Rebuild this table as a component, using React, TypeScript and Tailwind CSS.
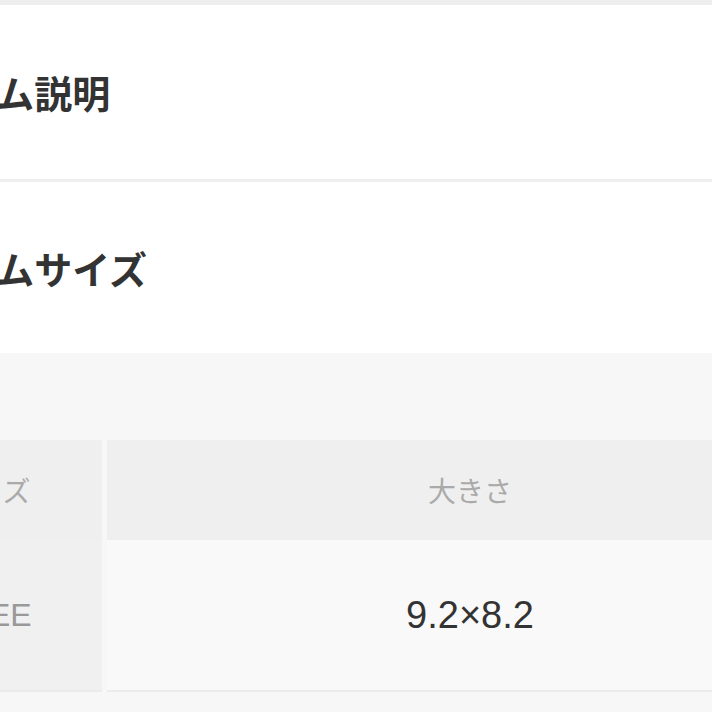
const jp = "font-['Noto_Sans_CJK_JP',sans-serif]";

const sizeRows = [{ size: "FREE", dims: "9.2×8.2" }];

function SectionTitle({ label, height }: { label: string; height: string }) {
	return (
		<section className={`${height} bg-white flex items-center pl-[26px]`}>
			<h2 className={`${jp} text-[38px] font-bold text-[#333333] leading-none`}>
				{label}
			</h2>
		</section>
	);
}

export default function App() {
	return (
		<div className="w-[712px] h-[712px] overflow-hidden bg-[#f7f7f7]">
			<div className="ml-[-140px] w-[990px] flex flex-col">
				<div className="h-[5px] bg-[#eeeeee]" />
				<SectionTitle label="アイテム説明" height="h-[174px]" />
				<div className="h-[3px] bg-[#efefef]" />
				<SectionTitle label="アイテムサイズ" height="h-[171px]" />

				<section className="bg-[#f7f7f7] pt-[87px] pl-[16px]">
					<div className="grid grid-cols-[226px_726px] gap-x-[5px]">
						<div className="h-[100px] bg-[#efefef] flex items-center justify-center">
							<span className={`${jp} text-[28px] text-[#aaaaaa]`}>サイズ</span>
						</div>
						<div className="h-[100px] bg-[#efefef] flex items-center justify-center">
							<span className={`${jp} text-[28px] text-[#aaaaaa]`}>大きさ</span>
						</div>
						{sizeRows.map((row) => (
							<>
								<div
									key={row.size + "-k"}
									className="h-[152px] bg-[#f0f0f0] flex items-center justify-center border-b-2 border-[#ebebeb]"
								>
									<span className="font-['Liberation_Sans',sans-serif] text-[32px] text-[#999999]">
										{row.size}
									</span>
								</div>
								<div
									key={row.size + "-v"}
									className="h-[152px] bg-[#f9f9f9] flex items-center justify-center border-b-2 border-[#ebebeb]"
								>
									<span className="font-['Liberation_Sans',sans-serif] text-[38px] text-[#333333]">
										{row.dims}
									</span>
								</div>
							</>
						))}
					</div>
					<div className="h-[20px]" />
				</section>
			</div>
		</div>
	);
}
